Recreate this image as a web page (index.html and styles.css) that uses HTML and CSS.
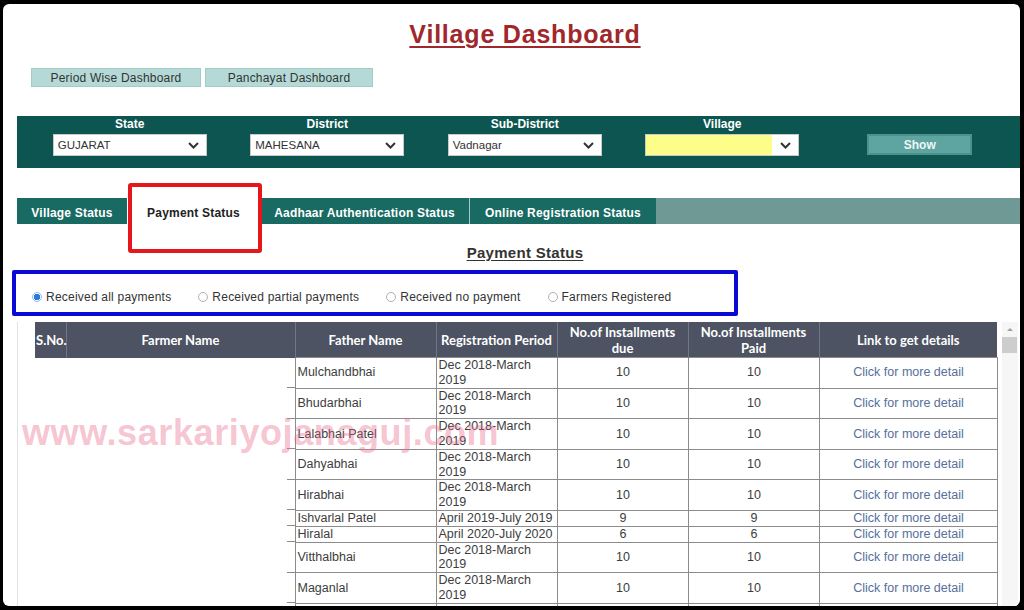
FILE: index.html
```html
<!DOCTYPE html>
<html lang="en">
<head>
<meta charset="utf-8">
<title>Village Dashboard</title>
<link rel="stylesheet" href="styles.css">
</head>
<body>
<div class="frame">
  <div class="page">
    <h1 class="title">Village Dashboard</h1>
    <div class="nav">
      <button class="nav-btn nav-btn-a">Period Wise Dashboard</button>
      <button class="nav-btn nav-btn-b">Panchayat Dashboard</button>
    </div>

    <div class="filter">
      <div class="fcol">
        <div class="flabel">State</div>
        <div class="sel"><span class="sel-text">GUJARAT</span><svg class="chev" viewBox="0 0 11 7"><polyline points="1,1 5.5,5.5 10,1" fill="none" stroke="#333" stroke-width="2"/></svg></div>
      </div>
      <div class="fcol">
        <div class="flabel">District</div>
        <div class="sel"><span class="sel-text">MAHESANA</span><svg class="chev" viewBox="0 0 11 7"><polyline points="1,1 5.5,5.5 10,1" fill="none" stroke="#333" stroke-width="2"/></svg></div>
      </div>
      <div class="fcol">
        <div class="flabel">Sub-District</div>
        <div class="sel"><span class="sel-text">Vadnagar</span><svg class="chev" viewBox="0 0 11 7"><polyline points="1,1 5.5,5.5 10,1" fill="none" stroke="#333" stroke-width="2"/></svg></div>
      </div>
      <div class="fcol">
        <div class="flabel">Village</div>
        <div class="sel sel-village"><span class="sel-yellow"></span><svg class="chev" viewBox="0 0 11 7"><polyline points="1,1 5.5,5.5 10,1" fill="none" stroke="#333" stroke-width="2"/></svg></div>
      </div>
      <div class="fcol">
        <div class="flabel"></div>
        <button class="show">Show</button>
      </div>
    </div>

    <div class="tabs">
      <div class="tab tab-1">Village Status</div>
      <div class="tab tab-2 active">Payment Status</div>
      <div class="tab tab-3">Aadhaar Authentication Status</div>
      <div class="tab tab-4">Online Registration Status</div>
    </div>

    <h2 class="sub">Payment Status</h2>

    <div class="radios">
      <label class="radio"><span class="dot on"></span>Received all payments</label>
      <label class="radio"><span class="dot"></span>Received partial payments</label>
      <label class="radio"><span class="dot"></span>Received no payment</label>
      <label class="radio"><span class="dot"></span>Farmers Registered</label>
    </div>

    <div class="grid-wrap">
      <table class="tbl">
        <colgroup>
          <col class="c-sno"><col class="c-farmer"><col class="c-father"><col class="c-reg"><col class="c-due"><col class="c-paid"><col class="c-link">
        </colgroup>
        <thead>
          <tr>
            <th class="th-sno">S.No.</th>
            <th>Farmer Name</th>
            <th>Father Name</th>
            <th>Registration Period</th>
            <th>No.of Installments<br>due</th>
            <th>No.of Installments<br>Paid</th>
            <th>Link to get details</th>
          </tr>
        </thead>
        <tbody>
          <tr><td class="blank"></td><td class="blank farmer"></td><td>Mulchandbhai</td><td>Dec 2018-March 2019</td><td class="num">10</td><td class="num">10</td><td class="link">Click for more detail</td></tr>
          <tr><td class="blank"></td><td class="blank farmer"></td><td>Bhudarbhai</td><td>Dec 2018-March 2019</td><td class="num">10</td><td class="num">10</td><td class="link">Click for more detail</td></tr>
          <tr><td class="blank"></td><td class="blank farmer"></td><td>Lalabhai Patel</td><td>Dec 2018-March 2019</td><td class="num">10</td><td class="num">10</td><td class="link">Click for more detail</td></tr>
          <tr><td class="blank"></td><td class="blank farmer"></td><td>Dahyabhai</td><td>Dec 2018-March 2019</td><td class="num">10</td><td class="num">10</td><td class="link">Click for more detail</td></tr>
          <tr><td class="blank"></td><td class="blank farmer"></td><td>Hirabhai</td><td>Dec 2018-March 2019</td><td class="num">10</td><td class="num">10</td><td class="link">Click for more detail</td></tr>
          <tr><td class="blank"></td><td class="blank farmer"></td><td>Ishvarlal Patel</td><td>April 2019-July 2019</td><td class="num">9</td><td class="num">9</td><td class="link">Click for more detail</td></tr>
          <tr><td class="blank"></td><td class="blank farmer"></td><td>Hiralal</td><td>April 2020-July 2020</td><td class="num">6</td><td class="num">6</td><td class="link">Click for more detail</td></tr>
          <tr><td class="blank"></td><td class="blank farmer"></td><td>Vitthalbhai</td><td>Dec 2018-March 2019</td><td class="num">10</td><td class="num">10</td><td class="link">Click for more detail</td></tr>
          <tr><td class="blank"></td><td class="blank farmer"></td><td>Maganlal</td><td>Dec 2018-March 2019</td><td class="num">10</td><td class="num">10</td><td class="link">Click for more detail</td></tr>
          <tr><td class="blank"></td><td class="blank farmer"></td><td>Jethabhai</td><td>Dec 2018-March 2019</td><td class="num">10</td><td class="num">10</td><td class="link">Click for more detail</td></tr>
        </tbody>
      </table>
      <div class="scroll">
        <div class="scroll-up"><span class="tri"></span></div>
        <div class="thumb"></div>
      </div>
    </div>
  </div>

  <div class="mark mark-red"></div>
  <div class="mark mark-blue"></div>
  <div class="watermark">www.sarkariyojanaguj.com</div>
</div>
</body>
</html>
```

FILE: styles.css
```css
html, body {
  margin: 0;
  padding: 0;
  background: #000;
}

body {
  font-family: "Liberation Sans", Arial, sans-serif;
}

.frame {
  position: relative;
  margin: 4px 4px 4px 3px;
  height: 602px;
  background: #fff;
  border-radius: 6px;
  overflow: hidden;
}

.page {
  width: 1016px;
  padding-left: 14px;
}

.title {
  margin: 0;
  padding-top: 15px;
  text-align: center;
  font-size: 25px;
  line-height: 30px;
  letter-spacing: 0.8px;
  font-weight: bold;
  color: #a0282c;
  text-decoration: underline;
  text-decoration-thickness: 2px;
  text-underline-offset: 3px;
}

.nav {
  display: flex;
  gap: 4px;
  margin: 19px 0 0 14px;
}

.nav-btn {
  height: 19px;
  padding: 0;
  font-family: "Liberation Sans", Arial, sans-serif;
  font-size: 12px;
  letter-spacing: 0.2px;
  color: #333;
  background: #b4d9d6;
  border: 1px solid #a3cbc8;
}

.nav-btn-a { width: 170px; }
.nav-btn-b { width: 168px; }

.filter {
  margin-top: 29px;
  height: 52px;
  box-sizing: border-box;
  background: #0c5550;
  display: grid;
  grid-template-columns: repeat(5, 197.5px);
  padding-left: 14px;
}

.fcol {
  display: flex;
  flex-direction: column;
  align-items: center;
  padding-top: 1px;
}

.flabel {
  height: 14px;
  line-height: 14px;
  color: #fff;
  font-weight: bold;
  font-size: 12px;
}

.sel {
  margin-top: 3px;
  width: 154px;
  height: 22px;
  box-sizing: border-box;
  background: #fff;
  border: 1px solid #c9c9c9;
  display: flex;
  align-items: center;
  padding: 0 7px 0 4px;
  font-size: 11.5px;
  color: #333;
}

.sel-text { flex: 1; }

.sel-village { padding-left: 0; }

.sel-yellow {
  flex: 1;
  align-self: stretch;
  background: #fdfd8a;
  margin-right: 8px;
}

.chev {
  width: 11px;
  height: 7px;
}

.show {
  margin-top: 3px;
  width: 105px;
  height: 21px;
  padding: 0;
  box-sizing: border-box;
  background: #5ea4a0;
  border: 2px solid #4d918d;
  color: #eef8f7;
  font-family: "Liberation Sans", Arial, sans-serif;
  font-weight: bold;
  font-size: 12px;
}

.tabs {
  margin-top: 30px;
  display: flex;
  height: 26px;
  background: #6f9995;
}

.tab {
  display: flex;
  align-items: center;
  justify-content: center;
  box-sizing: border-box;
  padding-top: 3px;
  color: #fff;
  font-weight: bold;
  font-size: 12px;
  letter-spacing: 0.2px;
  background: #186a62;
}

.tab-1 { width: 110px; }
.tab-2 { width: 133px; }
.tab-3 { width: 209px; }
.tab-4 { width: 187px; border-left: 1px solid #a5c6c2; }

.tab.active {
  background: #fff;
  color: #222;
}

.sub {
  margin: 20px 0 0;
  text-align: center;
  font-size: 15px;
  line-height: 18px;
  font-weight: bold;
  letter-spacing: 0.3px;
  color: #333;
  text-decoration: underline;
  text-underline-offset: 2px;
}

.radios {
  margin: 27px 0 0 15px;
  display: flex;
  gap: 27px;
  font-size: 12px;
  line-height: 16px;
  color: #333;
  letter-spacing: 0.22px;
}

.radio {
  display: flex;
  align-items: center;
  gap: 4px;
}

.dot {
  width: 10px;
  height: 10px;
  box-sizing: border-box;
  border-radius: 50%;
  border: 1px solid #b0b0b0;
  background: #fff;
}

.dot.on {
  border: 1px solid #8fb8ee;
  background: radial-gradient(circle, #2a78de 0 3px, #fff 3.5px);
}

.grid-wrap {
  margin-top: 17px;
  display: flex;
  align-items: flex-start;
  border-left: 1px solid #e3e3e3;
  padding-left: 17px;
}

.tbl {
  width: 962px;
  table-layout: fixed;
  border-collapse: collapse;
}

.c-sno { width: 31px; }
.c-farmer { width: 229px; }
.c-father { width: 141px; }
.c-reg { width: 121px; }
.c-due { width: 131px; }
.c-paid { width: 131px; }
.c-link { width: 178px; }

.tbl th {
  height: 35px;
  padding: 0;
  background: #4d5363;
  color: #fff;
  font-family: Lato, "Open Sans", sans-serif;
  font-weight: bold;
  font-size: 13px;
  line-height: 16px;
  border-left: 1px solid #70768a;
  text-align: center;
}

.tbl th.th-sno {
  text-align: left;
  white-space: nowrap;
  border-left: none;
  padding-left: 1px;
}

.tbl td {
  padding: 0 1px 0 2px;
  font-size: 12.5px;
  line-height: 14.8px;
  color: #3d3d3d;
  border: 1px solid #8c8c8c;
  vertical-align: middle;
  text-align: left;
}

.tbl td.blank {
  border: none;
}

.tbl td.farmer {
  background: linear-gradient(#8c8c8c, #8c8c8c) no-repeat right bottom / 8px 1px;
}

.tbl td.num {
  text-align: center;
}

.tbl td.link {
  text-align: center;
  color: #55709b;
}

.scroll {
  width: 16px;
  margin-left: 4px;
  height: 300px;
  background: #f6f6f6;
  display: flex;
  flex-direction: column;
  align-items: center;
}

.scroll-up {
  height: 15px;
  display: flex;
  align-items: center;
  justify-content: center;
}

.tri {
  width: 0;
  height: 0;
  border-left: 3px solid transparent;
  border-right: 3px solid transparent;
  border-bottom: 3px solid #a0a0a0;
}

.thumb {
  width: 15px;
  height: 16px;
  background: #cdcdcd;
}

.mark {
  position: absolute;
  box-sizing: border-box;
  pointer-events: none;
}

.mark-red {
  left: 125px;
  top: 179px;
  width: 134px;
  height: 70px;
  border: 4px solid #e5161c;
  border-radius: 3px;
}

.mark-blue {
  left: 9px;
  top: 266px;
  width: 726px;
  height: 46px;
  border: 4px solid #0a0ad6;
  border-radius: 2px;
}

.watermark {
  position: absolute;
  left: 19px;
  top: 411px;
  font-family: "Liberation Sans", Arial, sans-serif;
  font-weight: bold;
  font-size: 36px;
  line-height: 36px;
  letter-spacing: 0.6px;
  color: rgba(232, 105, 140, 0.4);
  white-space: nowrap;
  pointer-events: none;
}
```
